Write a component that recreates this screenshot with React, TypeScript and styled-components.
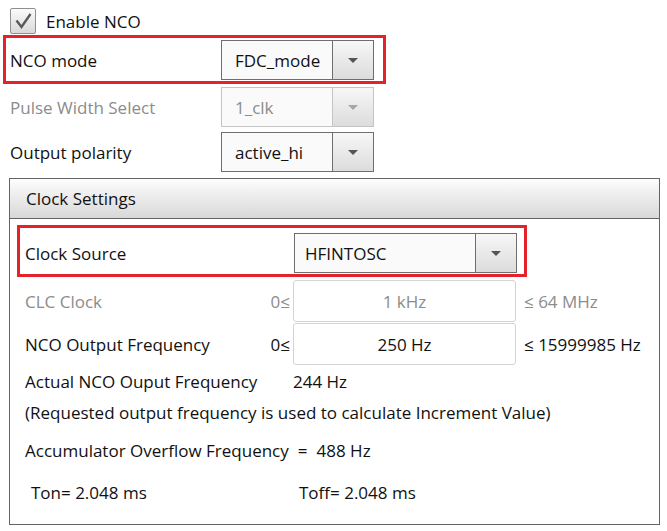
import React from "react";
import styled, { createGlobalStyle, css } from "styled-components";

const Global = createGlobalStyle`
  html, body { margin: 0; padding: 0; background: #fff; }
  body { font-family: "Open Sans", "Noto Sans", sans-serif; font-size: 17px; color: #111; }
`;

const Page = styled.div`
  width: 667px;
  height: 531px;
  box-sizing: border-box;
  padding-top: 8px;
  overflow: hidden;
`;

const CheckRow = styled.label`
  display: flex;
  align-items: center;
  gap: 10px;
  height: 26px;
  margin-left: 10px;
`;

const CheckBox = styled.span`
  width: 26px;
  height: 26px;
  box-sizing: border-box;
  border: 1px solid #8f8f8f;
  border-radius: 2px;
  background: linear-gradient(#fbfbfb, #d9d9d9);
  display: flex;
  align-items: center;
  justify-content: center;
`;

const Highlight = styled.div<{ $pad: string }>`
  border: 3px solid #e5212a;
  display: flex;
  align-items: center;
  padding: ${(p) => p.$pad};
`;

const TopHighlight = styled(Highlight)`
  width: 383px;
  box-sizing: border-box;
  margin: 1px 0 0 3px;
`;

const Row = styled.div<{ $mt: number }>`
  display: flex;
  align-items: center;
  margin-top: ${(p) => p.$mt}px;
  padding-left: 10px;
`;

const Label = styled.span<{ $w: number; $disabled?: boolean }>`
  width: ${(p) => p.$w}px;
  flex: none;
  color: ${(p) => (p.$disabled ? "#8c8c8c" : "#111")};
  white-space: nowrap;
`;

const Select = styled.div<{ $w: number; $disabled?: boolean }>`
  display: flex;
  width: ${(p) => p.$w}px;
  height: 40px;
  box-sizing: border-box;
  border: 1px solid ${(p) => (p.$disabled ? "#c4c4c4" : "#6e6e6e")};
  background: #fafafa;
  ${(p) =>
    p.$disabled &&
    css`
      color: #8c8c8c;
    `}
`;

const SelectText = styled.span<{ $pl: number }>`
  flex: 1;
  display: flex;
  align-items: center;
  padding-left: ${(p) => p.$pl}px;
  white-space: nowrap;
`;

const SelectButton = styled.span<{ $disabled?: boolean }>`
  width: 40px;
  flex: none;
  border-left: 1px solid ${(p) => (p.$disabled ? "#c4c4c4" : "#6e6e6e")};
  background: linear-gradient(#f7f7f7, #dcdcdc);
  display: flex;
  align-items: center;
  justify-content: center;
`;

const Arrow = styled.span<{ $disabled?: boolean }>`
  width: 0;
  height: 0;
  border-left: 5px solid transparent;
  border-right: 5px solid transparent;
  border-top: 5px solid ${(p) => (p.$disabled ? "#a6a6a6" : "#555")};
`;

const Panel = styled.section`
  margin: 6px 0 0 9px;
  width: 651px;
  height: 347px;
  box-sizing: border-box;
  border: 1px solid #646464;
`;

const PanelHeader = styled.div`
  height: 40px;
  box-sizing: border-box;
  border-bottom: 1px solid #646464;
  background: linear-gradient(#fdfdfd, #d8d8d8);
  display: flex;
  align-items: center;
  padding-left: 16px;
`;

const PanelBody = styled.div`
  padding: 6px 0 0 7px;
`;

const SourceHighlight = styled(Highlight)`
  width: 510px;
  box-sizing: border-box;
  padding-left: 5px;
`;

const FieldGrid = styled.div`
  display: grid;
  grid-template-columns: 241px 27px 223px auto;
  grid-auto-rows: 42px;
  align-items: center;
  padding-left: 8px;
  margin-top: 3px;
  row-gap: 1px;
`;

const Prefix = styled.span<{ $disabled?: boolean }>`
  color: ${(p) => (p.$disabled ? "#8c8c8c" : "#111")};
  text-align: right;
  padding-right: 3px;
  white-space: nowrap;
`;

const Suffix = styled.span<{ $disabled?: boolean }>`
  color: ${(p) => (p.$disabled ? "#8c8c8c" : "#111")};
  padding-left: 8px;
  white-space: nowrap;
`;

const Input = styled.div<{ $disabled?: boolean }>`
  height: 42px;
  box-sizing: border-box;
  border: 1px solid #d4d4d4;
  border-radius: 3px;
  background: #fff;
  display: flex;
  align-items: center;
  justify-content: center;
  color: ${(p) => (p.$disabled ? "#8c8c8c" : "#111")};
`;

const InfoLine = styled.div<{ $mt: number; $pl?: number }>`
  display: flex;
  align-items: center;
  margin-top: ${(p) => p.$mt}px;
  padding-left: ${(p) => 8 + (p.$pl ?? 0)}px;
  white-space: nowrap;
  height: 24px;
`;

const Spacer = styled.span<{ $w: number }>`
  width: ${(p) => p.$w}px;
  flex: none;
`;

const Check = () => (
  <svg width="20" height="20" viewBox="0 0 20 20">
    <path d="M3.5 9.5 L8.5 16 L17.5 3" fill="none" stroke="#5a5a5a" strokeWidth="2.4" />
  </svg>
);

const Dropdown: React.FC<{ w: number; text: string; pl: number; disabled?: boolean }> = ({ w, text, pl, disabled }) => (
  <Select $w={w} $disabled={disabled}>
    <SelectText $pl={pl}>{text}</SelectText>
    <SelectButton $disabled={disabled}>
      <Arrow $disabled={disabled} />
    </SelectButton>
  </Select>
);

export default function App() {
  return (
    <>
      <Global />
      <Page>
        <CheckRow>
          <CheckBox>
            <Check />
          </CheckBox>
          <span>Enable NCO</span>
        </CheckRow>
        <TopHighlight $pad="2px 0 1px 4px">
          <Label $w={211}>NCO mode</Label>
          <Dropdown w={153} text="FDC_mode" pl={13} />
        </TopHighlight>
        <Row $mt={3}>
          <Label $w={211} $disabled>Pulse Width Select</Label>
          <Dropdown w={153} text="1_clk" pl={13} disabled />
        </Row>
        <Row $mt={5}>
          <Label $w={211}>Output polarity</Label>
          <Dropdown w={153} text="active_hi" pl={13} />
        </Row>
        <Panel>
          <PanelHeader>Clock Settings</PanelHeader>
          <PanelBody>
            <SourceHighlight $pad="5px 0 1px 5px">
              <Label $w={269}>Clock Source</Label>
              <Dropdown w={223} text="HFINTOSC" pl={10} />
            </SourceHighlight>
            <FieldGrid>
              <Label $w={241} $disabled>CLC Clock</Label>
              <Prefix $disabled>0≤</Prefix>
              <Input $disabled>1 kHz</Input>
              <Suffix $disabled>≤ 64 MHz</Suffix>
              <Label $w={241}>NCO Output Frequency</Label>
              <Prefix>0≤</Prefix>
              <Input>250 Hz</Input>
              <Suffix>≤ 15999985 Hz</Suffix>
            </FieldGrid>
            <InfoLine $mt={4}>
              <Label $w={268}>Actual NCO Ouput Frequency</Label>
              <span>244 Hz</span>
            </InfoLine>
            <InfoLine $mt={7}>(Requested output frequency is used to calculate Increment Value)</InfoLine>
            <InfoLine $mt={14}>
              <span>Accumulator Overflow Frequency</span>
              <Spacer $w={9} />
              <span>=</span>
              <Spacer $w={9} />
              <span>488 Hz</span>
            </InfoLine>
            <InfoLine $mt={18} $pl={6}>
              <Label $w={268}>Ton= 2.048 ms</Label>
              <span>Toff= 2.048 ms</span>
            </InfoLine>
          </PanelBody>
        </Panel>
      </Page>
    </>
  );
}
